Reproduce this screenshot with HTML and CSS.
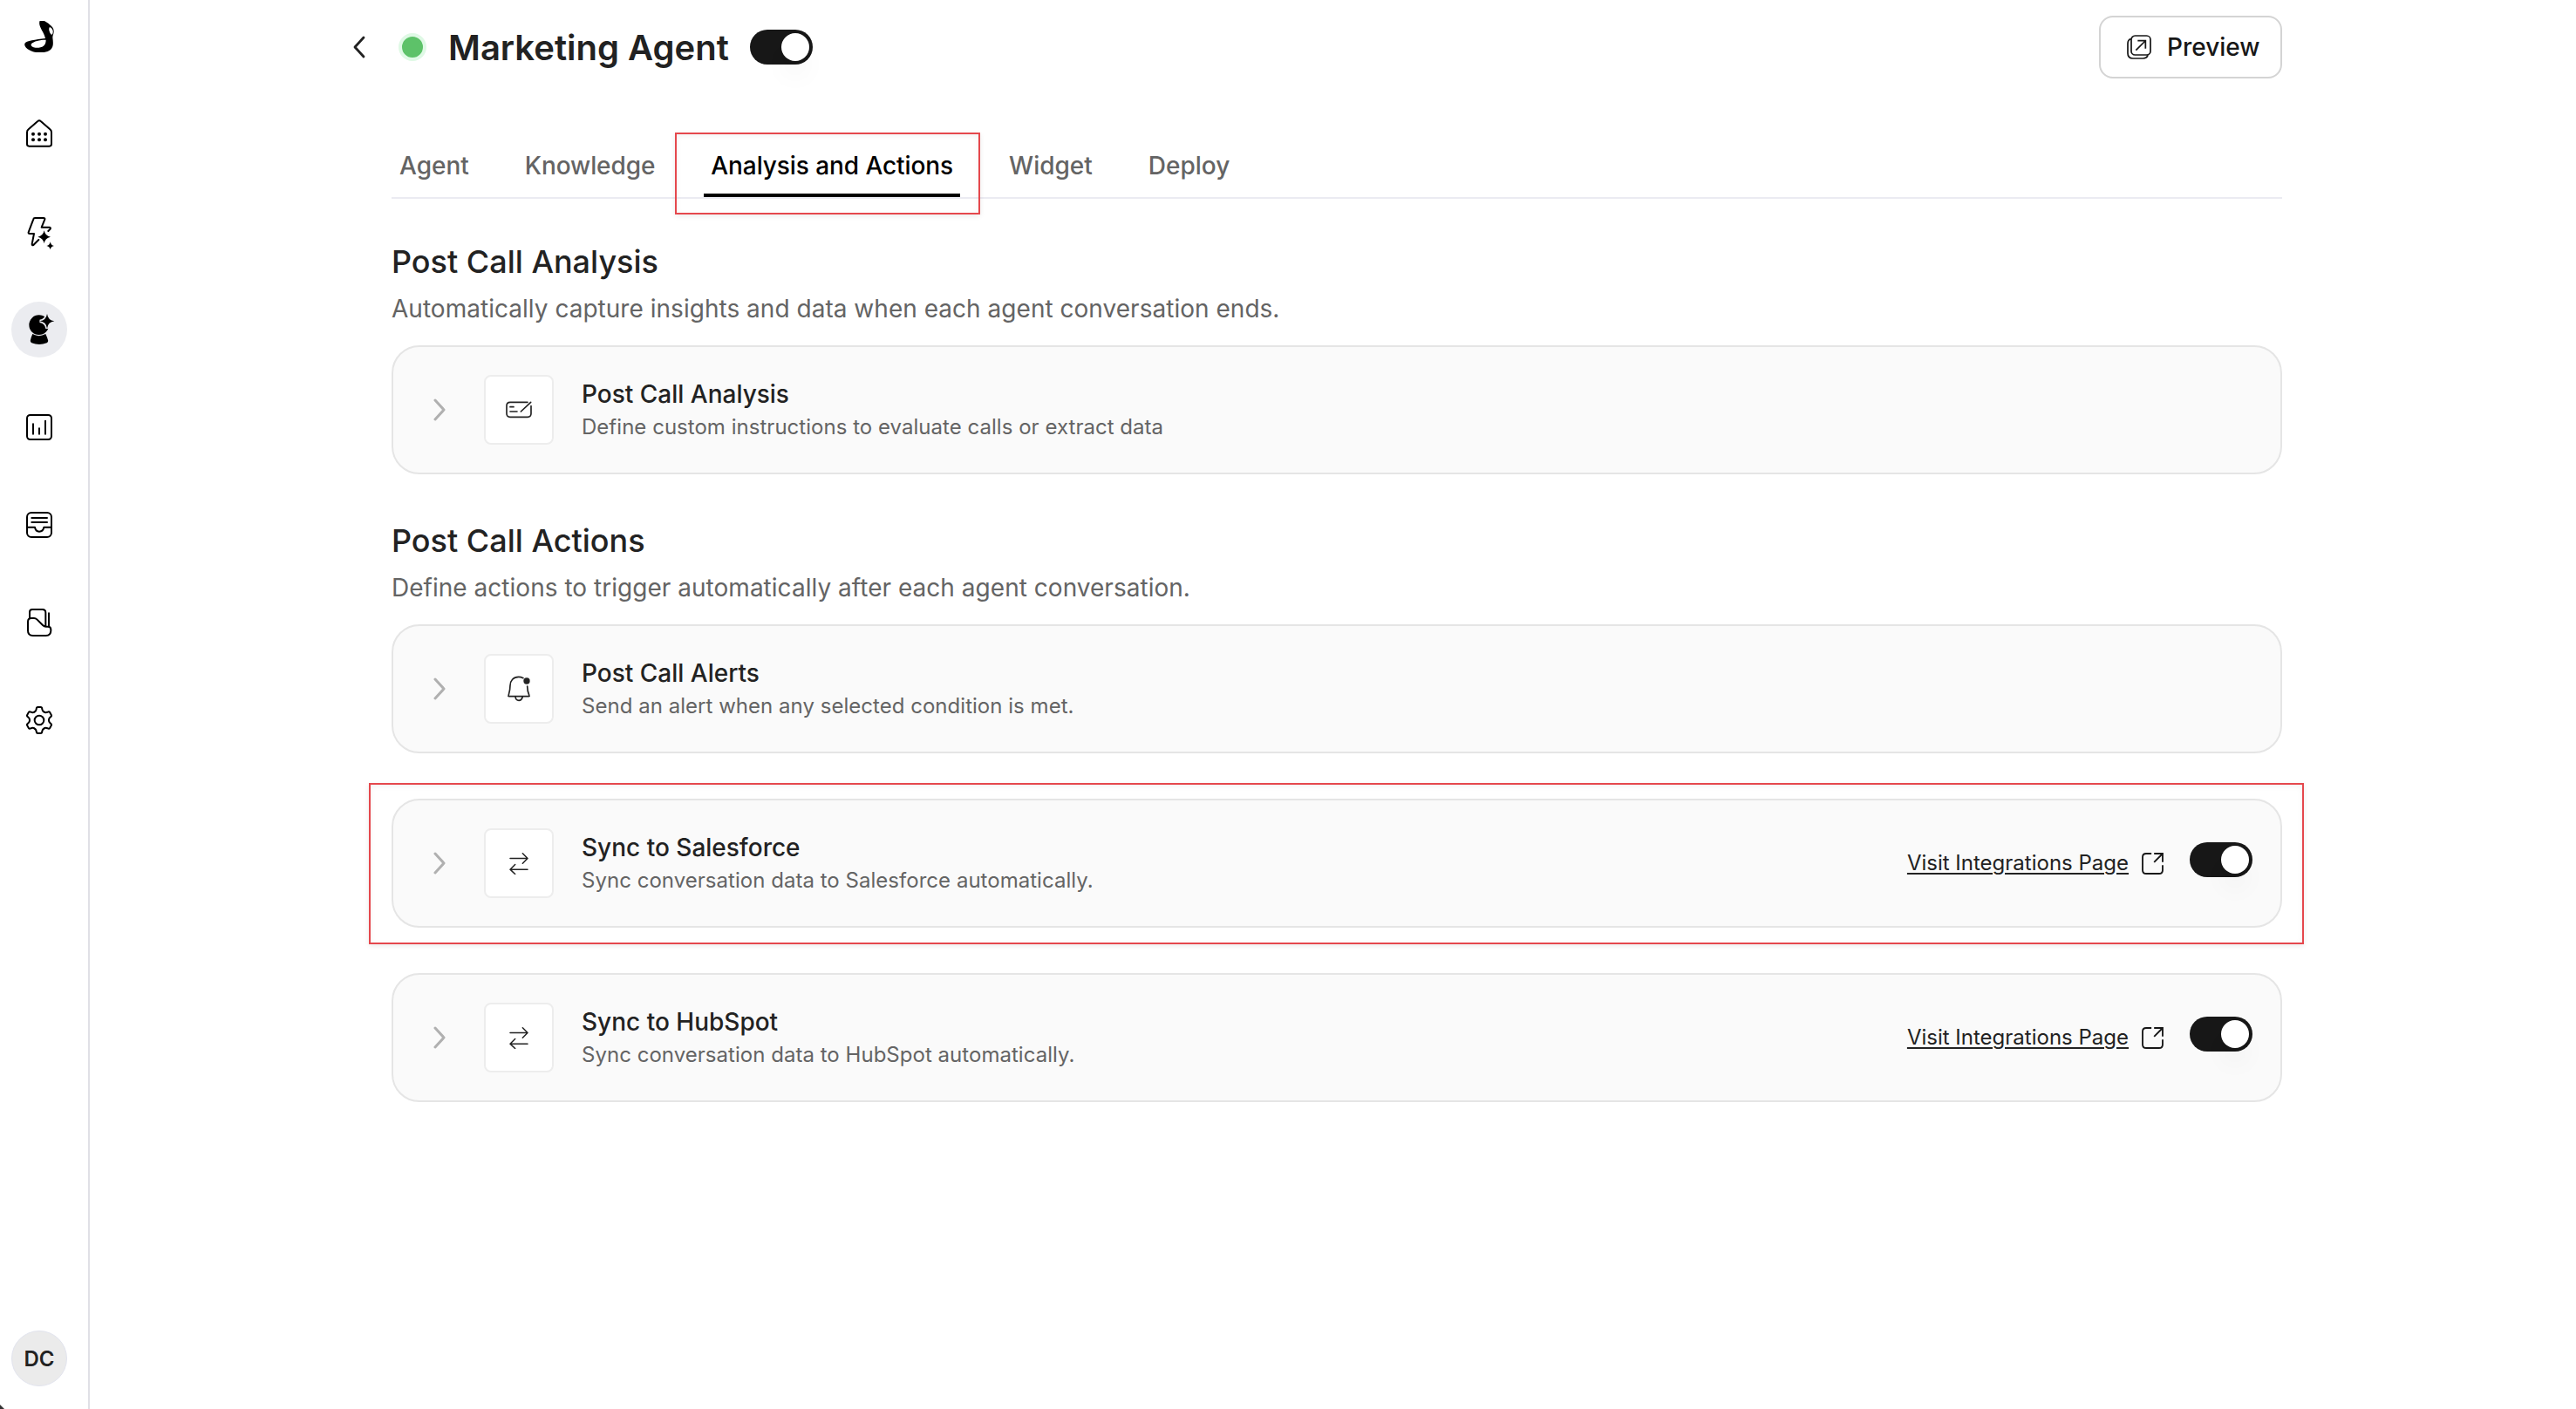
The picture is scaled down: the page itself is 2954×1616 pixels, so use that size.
FILE: index.html
```
<!DOCTYPE html>
<html lang="en">
<head>
<meta charset="utf-8">
<title>Marketing Agent</title>
<link rel="stylesheet" href="styles.css">
</head>
<body>
<svg class="defs" aria-hidden="true">
  <symbol id="chevron" viewBox="0 0 14 26"><path d="M2 2 L12 13 L2 24" fill="none" stroke="currentColor" stroke-width="3" stroke-linecap="round" stroke-linejoin="round"/></symbol>
  <symbol id="swap" viewBox="0 0 66 74"><path d="M3 19H62M46 2L63 19L46 36M63 57H4M20 40L3 57L20 73" fill="none" stroke="currentColor" stroke-width="4.5" stroke-linecap="round" stroke-linejoin="round"/></symbol>
  <symbol id="external" viewBox="0 0 74 74"><path d="M33 3H15Q3 3 3 15V59Q3 71 15 71H59Q71 71 71 59V42M42 3H71V32M71 3L42 32" fill="none" stroke="currentColor" stroke-width="5.5"/></symbol>
</svg>
<div class="app">
  <nav class="sidebar">
    <a class="nav logo"><svg viewBox="81 72 108 108"><path fill-rule="evenodd" d="M137 70C146 66 162 76 171 85C181 92 186 101 185 110C184 119 181 121 181 130C183 145 185 160 174 171C158 184 123 184 103 173C89 166 83 157 85 150C90 139 122 137 156 132C151 110 132 92 136 75ZM108 151C104 157 110 163 122 164C145 165 158 158 158 137C136 137 116 142 108 151ZM171 93C167 98 168 106 175 118C180 123 183 113 182 106C180 99 176 95 171 93Z"/></svg></a>
    <a class="nav"><svg viewBox="81 408 108 108"><path class="s" d="M93 455Q93 449 98 445L129 418Q135 412 141 418L172 445Q177 449 177 455V496Q177 503 170 503H100Q93 503 93 496Z"/><g><circle cx="114" cy="461" r="6"/><circle cx="135" cy="461" r="6"/><circle cx="156" cy="461" r="6"/><circle cx="114" cy="481" r="6"/><circle cx="135" cy="481" r="6"/><circle cx="156" cy="481" r="6"/></g></svg></a>
    <a class="nav"><svg viewBox="81 738 108 120"><path class="s" d="M166 795L173 788Q175 782 170 782H143L154 755Q155 750 150 750H120Q116 750 115 754L98 799Q97 804 102 804H117L110 840Q110 845 115 843L133 825"/><path d="M152 793Q155 812 174 815Q155 819 152 838Q148 819 130 815Q148 812 152 793ZM173 832Q175 844 186 846Q175 848 173 859Q171 848 160 846Q171 844 173 832Z"/></svg></a>
    <a class="nav active"><svg viewBox="81 1080 108 108"><circle cx="134" cy="1118" r="34"/><path class="halo" d="M162 1080Q165 1102 187 1105Q165 1108 162 1130Q159 1108 137 1105Q159 1102 162 1080Z"/><path d="M112 1149Q134 1162 157 1149Q162 1160 165 1170Q167 1177 161 1180Q135 1190 109 1180Q103 1177 105 1170Q107 1160 112 1149Z"/></svg></a>
    <a class="nav"><svg viewBox="81 96 108 108"><rect class="s" x="93" y="108" width="84" height="84" rx="11"/><path class="s" d="M114 139V173M135 154V173M156 128V173"/></svg></a>
    <a class="nav"><svg viewBox="81 432 108 108"><rect class="s" x="93" y="444" width="84" height="84" rx="15"/><path class="s" d="M109 462H162M109 477H162M93 494H120Q122 509 135 509Q149 509 151 494H177"/></svg></a>
    <a class="nav"><svg viewBox="81 768 108 108"><path class="s" d="M102 806V786Q102 777 111 777H146Q157 777 157 788V835M168 790V836M96 819Q96 807 108 807H117Q123 807 127 811L147 831Q152 836 158 836H165Q175 836 175 846V850Q175 867 158 867H113Q96 867 96 850Z"/></svg></a>
    <a class="nav"><svg viewBox="-54 -54 108 108"><g id="gear"><path id="tooth" class="s" d="M-16.5 -28.6Q-11 -31 -10 -38Q-9.5 -45 -5 -45H5Q9.5 -45 10 -38Q11 -31 16.5 -28.6"/><use href="#tooth" transform="rotate(60)"/><use href="#tooth" transform="rotate(120)"/><use href="#tooth" transform="rotate(180)"/><use href="#tooth" transform="rotate(240)"/><use href="#tooth" transform="rotate(300)"/></g><circle class="s" r="16"/></svg></a>
    <div class="avatar">DC</div>
    <svg class="corner" viewBox="0 0 5 5"><path d="M0 0L5 5H0Z"/></svg>
  </nav>
  <main class="page">
    <header class="header">
      <svg class="back" viewBox="0 0 14 26"><path d="M12 2L2 13L12 24" fill="none" stroke="currentColor" stroke-width="2.8" stroke-linecap="round" stroke-linejoin="round"/></svg>
      <span class="status"></span>
      <h1>Marketing Agent</h1>
      <span class="toggle"></span>
      <button class="preview"><svg viewBox="0 0 84 84"><rect x="15" y="3" width="66" height="66" rx="13"/><path d="M14 14Q3 17 3 30V63Q3 81 21 81H55Q69 81 72 70M31 53L63 21M37 20H64V47"/></svg><span>Preview</span></button>
    </header>
    <div class="tabs">
      <a class="tab">Agent</a>
      <a class="tab">Knowledge</a>
      <a class="tab selected">Analysis and Actions</a>
      <a class="tab">Widget</a>
      <a class="tab">Deploy</a>
    </div>
    <section class="group first">
      <h2>Post Call Analysis</h2>
      <p class="lead">Automatically capture insights and data when each agent conversation ends.</p>
      <div class="card">
        <svg class="chev"><use href="#chevron"/></svg>
        <div class="tile"><svg width="30" height="20" viewBox="0 0 90 60"><path d="M75 4H15Q3 4 3 16V43Q3 55 15 55H75Q87 55 87 43V17M15 20H27M15 36H39M52 36L86 4" fill="none" stroke="currentColor" stroke-width="5" stroke-linecap="round"/></svg></div>
        <div class="text"><h3>Post Call Analysis</h3><p>Define custom instructions to evaluate calls or extract data</p></div>
      </div>
    </section>
    <section class="group">
      <h2>Post Call Actions</h2>
      <p class="lead">Define actions to trigger automatically after each agent conversation.</p>
      <div class="card">
        <svg class="chev"><use href="#chevron"/></svg>
        <div class="tile"><svg width="26" height="30" viewBox="0 0 78 90"><path d="M54 8Q46 4 38 4C20 4 9 17 9 34C9 51 5 61 3 69Q2 71 5 71H73Q76 71 75 69Q68 53 68 36M27 72Q28 85 39 85Q49 85 52 72" fill="none" stroke="currentColor" stroke-width="5" stroke-linecap="round"/><circle cx="66" cy="18" r="11" fill="currentColor"/></svg></div>
        <div class="text"><h3>Post Call Alerts</h3><p>Send an alert when any selected condition is met.</p></div>
      </div>
      <div class="card">
        <svg class="chev"><use href="#chevron"/></svg>
        <div class="tile"><svg width="22" height="25"><use href="#swap"/></svg></div>
        <div class="text"><h3>Sync to Salesforce</h3><p>Sync conversation data to Salesforce automatically.</p></div>
        <a class="link">Visit Integrations Page</a><svg class="ext"><use href="#external"/></svg><span class="toggle"></span>
      </div>
      <div class="card">
        <svg class="chev"><use href="#chevron"/></svg>
        <div class="tile"><svg width="22" height="25"><use href="#swap"/></svg></div>
        <div class="text"><h3>Sync to HubSpot</h3><p>Sync conversation data to HubSpot automatically.</p></div>
        <a class="link">Visit Integrations Page</a><svg class="ext"><use href="#external"/></svg><span class="toggle"></span>
      </div>
    </section>
  </main>
</div>
<div class="mark mark-tab"></div>
<div class="mark mark-card"></div>
</body>
</html>
```
FILE: styles.css
```
* { box-sizing: border-box; }
body { margin: 0; background: #fff; color: #222; font-family: Inter, "Liberation Sans", sans-serif; overflow: hidden; }
h1, h2, h3, p { margin: 0; }
.defs { display: none; }
.app { display: flex; height: 1616px; }

.sidebar { position: relative; width: 103px; flex: none; border-right: 2px solid #e0e0e6; padding: 10px 0 26px 13px; display: flex; flex-direction: column; gap: 48px; }
.nav { width: 64px; height: 64px; flex: none; border-radius: 50%; display: flex; align-items: center; justify-content: center; color: #000; }
.nav svg { width: 36px; display: block; fill: #000; }
.nav .s { fill: none; stroke: #000; stroke-width: 6; stroke-linecap: round; stroke-linejoin: round; }
.nav.active { background: #ebecf0; }
.nav .halo { stroke: #ebecf0; stroke-width: 10; paint-order: stroke; }
.avatar { width: 64px; height: 64px; margin-top: auto; border-radius: 50%; background: #ebebeb; border: 1px solid #e2e4ee; display: flex; align-items: center; justify-content: center; font-size: 24px; font-weight: 600; color: #222; }
.corner { position: absolute; left: 0; bottom: 0; width: 5px; height: 5px; fill: #333; }

.page { width: 2168px; margin-left: 346px; padding-top: 18px; }
.header { display: flex; align-items: center; height: 72px; margin-left: -44px; }
.back { width: 14px; height: 26px; color: #222; }
.status { width: 32px; height: 32px; margin-left: 38px; border-radius: 50%; background: #5dc269; border: 4px solid #dff9e5; }
h1 { margin: 1px 0 0 25px; width: 346px; font-size: 40px; line-height: 56px; font-weight: 600; white-space: nowrap; color: #222; }
.toggle { width: 72px; height: 40px; flex: none; border-radius: 20px; background: #171717; padding: 4px; display: flex; justify-content: flex-end; }
.toggle::after { content: ""; width: 32px; height: 32px; border-radius: 50%; background: #fff; box-shadow: 0 20px 30px -6px rgba(0,0,0,.08), 0 8px 12px -8px rgba(0,0,0,.08); }
.preview { margin-left: auto; width: 210px; height: 72px; padding: 0 0 0 30px; border: 2px solid #d4d4d4; border-radius: 16px; background: #fff; display: flex; align-items: center; gap: 18px; font: 500 28px/40px Inter, sans-serif; color: #171717; }
.preview svg { width: 28px; height: 28px; fill: none; stroke: #171717; stroke-width: 5.2; }

.tabs { display: flex; gap: 48px; height: 78px; margin-top: 60px; border-bottom: 2px solid #ebebf2; }
.tab { padding: 20px 8px 0; height: 76px; font-size: 28px; line-height: 40px; font-weight: 500; color: #646464; white-space: nowrap; }
.tab:first-child { padding-left: 9px; }
.tab:nth-child(2) { letter-spacing: -0.1px; }
.selected { letter-spacing: -0.08px; color: #000; border-bottom: 4px solid #000; }

.group { margin-top: 52px; }
.group.first { margin-top: 48px; }
h2 { font-size: 36px; line-height: 48px; font-weight: 500; color: #222; }
.lead { margin-top: 8px; font-size: 28px; line-height: 44px; letter-spacing: .025px; color: #646464; }
.card { display: flex; align-items: center; height: 148px; margin-top: 20px; padding: 0 32px 0 46px; border: 2px solid #e5e5e5; border-radius: 32px; background: #fafafa; }
.card + .card { margin-top: 52px; }
.chev { width: 14px; height: 26px; color: #b0b0b0; }
.tile { width: 80px; height: 80px; margin-left: 44px; border: 2px solid #ededed; border-radius: 8px; background: #fff; display: flex; align-items: center; justify-content: center; color: #222; }
.tile svg { margin-right: 1px; }
.text { margin-left: 32px; flex: 1; }
h3 { font-size: 28px; line-height: 40px; font-weight: 500; color: #222; }
.text p { font-size: 24px; line-height: 36px; letter-spacing: .03px; color: #646464; }
.link { font-size: 24px; line-height: 36px; color: #222; text-decoration: underline; text-decoration-thickness: 2px; text-underline-offset: 3px; }
.ext { width: 25px; height: 25px; margin: 0 30px 0 15px; color: #171717; }
.card .toggle { margin-bottom: 8px; }

.mark { position: absolute; border: 2px solid #e5484d; box-shadow: 0 2px 6px rgba(0,0,0,.08), inset 0 2px 6px rgba(0,0,0,.05); }
.mark-tab { left: 774px; top: 152px; width: 350px; height: 94px; }
.mark-card { left: 423px; top: 898px; width: 2219px; height: 185px; }
```
